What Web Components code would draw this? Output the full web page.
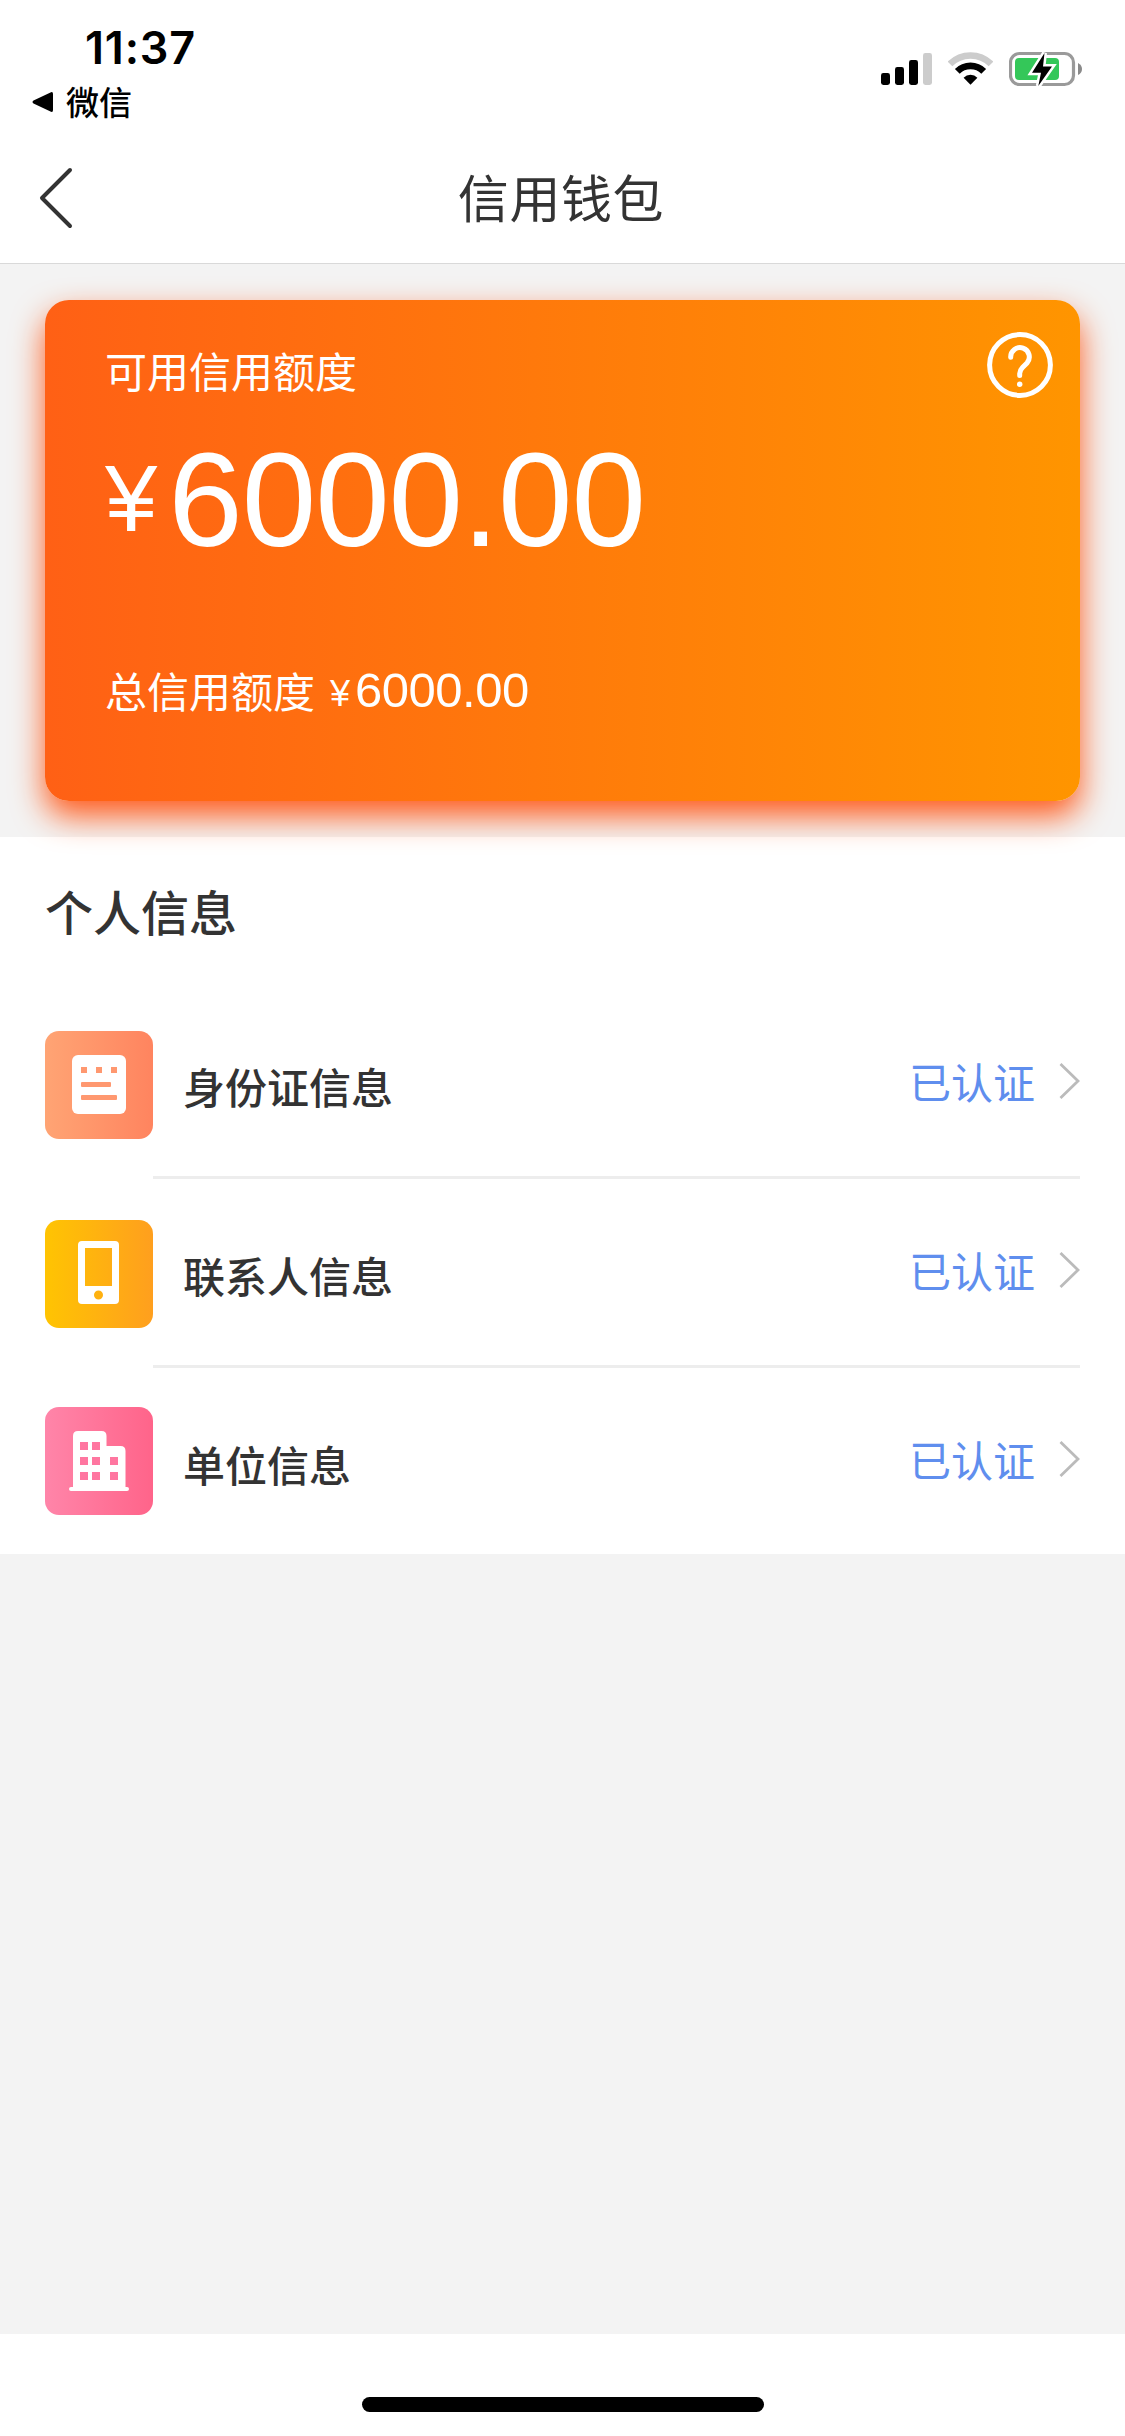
<!DOCTYPE html>
<html lang="zh-CN">
<head>
<meta charset="utf-8">
<title>信用钱包</title>
<style>
  body { margin: 0; background: #f3f3f3; }
</style>
</head>
<body>
<wallet-app></wallet-app>
<script>
const define = (name, html) => {
  const template = document.createElement('template');
  template.innerHTML = html;
  customElements.define(name, class extends HTMLElement {
    constructor() {
      super();
      this.attachShadow({ mode: 'open' }).append(template.content.cloneNode(true));
    }
  });
};

define('status-bar', `
<style>
  :host { display: flex; justify-content: space-between; height: 132px; box-sizing: border-box; color: #000; }
  .left { padding: 21px 0 0 32px; }
  .time { font: 600 45px/54px Inter, sans-serif; padding-left: 53px; letter-spacing: .8px; }
  .back { display: flex; align-items: center; gap: 12px; height: 54px; font-size: 33px; font-weight: 500; }
  .icons { display: flex; gap: 16px; padding: 50px 42px 0 0; height: 38px; }
  svg { display: block; }
</style>
<div class="left">
  <div class="time">11:37</div>
  <div class="back">
    <svg width="22" height="22" viewBox="0 0 22 22"><path d="M1.5 9.6 19 1.2Q21 .5 21 3V19Q21 21.5 19 20.8L1.5 12.4Q-.5 11 1.5 9.6Z"/></svg>
    <span>微信</span>
  </div>
</div>
<div class="icons">
  <svg width="51" height="38" viewBox="0 0 51 38">
    <rect y="23" width="9" height="12" rx="2.4"/><rect x="14" y="17" width="9" height="18" rx="2.4"/>
    <rect x="28" y="10" width="9" height="25" rx="2.4"/><rect x="42" y="3" width="9" height="32" rx="2.4" fill="#ccc"/>
  </svg>
  <svg width="45" height="38" viewBox="0 0 45 38" fill="none">
    <path d="M2 14A29 29 0 0 1 43 14" stroke="#ccc" stroke-width="6.600"/>
    <path d="M9.300 21.300A18.600 18.600 0 0 1 35.700 21.300" stroke="#000" stroke-width="6.800"/>
    <path d="M15.600 27.700A9.800 9.800 0 0 1 29.400 27.700L22.500 34.800Z" fill="#000"/>
  </svg>
  <svg width="74" height="38" viewBox="0 0 74 38">
    <rect x="1.500" y="3.500" width="63" height="31" rx="9" fill="none" stroke="#9a9a9a" stroke-width="3.200"/>
    <rect x="6" y="8" width="44" height="22" rx="4" fill="#34c759"/>
    <path d="M69 13Q73 15 73 19T69 25Z" fill="#8a8a8a"/>
    <path d="M35.500 3 23 22.700H32L29.300 36 43 16.400H34Z" fill="#000" stroke="#fff" stroke-width="5" paint-order="stroke"/>
  </svg>
</div>`);

define('nav-bar', `
<style>
  :host { display: grid; grid-template-columns: 120px 1fr 120px; align-items: center; height: 132px; box-sizing: border-box;
    border-bottom: 1px solid #d9d9d9; font-size: 51px; color: #333; text-align: center; }
  svg { display: block; margin-left: 38px; }
  ::slotted(*) { line-height: 129px; letter-spacing: .6px; margin: -2px 0 0 -3px; }
</style>
<svg width="36" height="64" viewBox="0 0 36 64" fill="none" stroke="#333" stroke-width="4" stroke-linecap="round" stroke-linejoin="round"><path d="M32 4 4 32 32 60"/></svg>
<slot></slot><i></i>`);

define('credit-card', `
<style>
  :host { display: flex; flex-direction: column; position: relative; height: 501px; box-sizing: border-box; margin: 36px 45px;
    padding: 43px 27px 0 60px; border-radius: 24px; color: #fff; font-size: 42px;
    background: linear-gradient(90deg, #ff6015, #ff9500); box-shadow: 0 15px 32px #ff5a1b; }
  .head { display: flex; justify-content: space-between; height: 82px; line-height: 54px; }
  .head svg { margin-top: -11px; }
  .amount { display: flex; align-items: flex-end; gap: 11px; height: 150px; font-family: "Liberation Sans", sans-serif; }
  .yen { font-size: 94px; line-height: 96px; padding-bottom: 28px; }
  .num { font-size: 134px; line-height: 150px; letter-spacing: -1.1px; }
  .total { display: flex; align-items: baseline; margin-top: 85px; line-height: 60px; }
  .total .num, .total .yen { font-family: "Liberation Sans", sans-serif; }
  .total .yen { font-size: 36px; line-height: 40px; margin: 0 0 0 15px; padding: 0; transform: translateY(-2px); }
  .total .num { font-size: 49px; line-height: 60px; margin-left: 5px; letter-spacing: -.5px; transform: translateY(-1px); }
</style>
<div class="head">
  <span>可用信用额度</span>
  <svg width="66" height="66" viewBox="0 0 66 66" fill="none" stroke="#fff" stroke-width="5" stroke-linecap="round">
    <circle cx="33" cy="33" r="30.400"/>
    <path d="M23.700 25.300A9.300 9.300 0 1 1 40 31L35.500 35.600Q32.700 38.500 32.700 41.500V43.500"/>
    <circle cx="32.700" cy="52.300" r="2.700" fill="#fff" stroke="none"/>
  </svg>
</div>
<div class="amount"><span class="yen">¥</span><span class="num"><slot name="available"></slot></span></div>
<div class="total"><span>总信用额度</span><span class="yen">¥</span><span class="num"><slot name="total"></slot></span></div>`);

define('info-row', `
<style>
  :host { display: flex; height: 189px; padding: 0 45px; }
  .icon { width: 108px; padding-top: var(--icon-top, 41px); }
  ::slotted(svg) { display: block; }
  .body { flex: 1; display: flex; align-items: center; justify-content: space-between; height: 186px; padding-left: 30px;
    border-bottom: 3px solid var(--line, #ededed); font-size: 42px; }
  .label { font-weight: 500; color: #333; padding-top: 7px; }
  .state { display: flex; align-items: center; gap: 23px; color: #5f8eee; padding-bottom: 4px; }
  .state svg { display: block; }
</style>
<div class="icon"><slot name="icon"></slot></div>
<div class="body">
  <span class="label"><slot></slot></span>
  <span class="state"><span>已认证</span>
    <svg width="22" height="38" viewBox="0 0 22 38" fill="none" stroke="#bbb" stroke-width="2.800"><path d="M2.500 2 20 19 2.500 36"/></svg>
  </span>
</div>`);

define('info-section', `
<style>
  :host { display: block; height: 717px; background: #fff; }
  h2 { margin: 0; padding: 38px 45px 0; height: 115px; font-size: 48px; line-height: 70px; font-weight: 500; color: #333; }
</style>
<h2><slot name="heading"></slot></h2>
<slot></slot>`);

define('home-indicator', `
<style>
  :host { display: flex; justify-content: center; height: 102px; background: #fff; }
  i { width: 402px; height: 15px; margin-top: 63px; border-radius: 8px; background: #000; }
</style><i></i>`);

define('wallet-app', `
<style>
  :host { display: flex; flex-direction: column; width: 1125px; height: 2436px; background: #f3f3f3;
    font-family: "Noto Sans CJK SC", sans-serif; line-height: 1.2; }
  header { background: #fff; height: 264px; }
  main { flex: 1; display: flow-root; }
  .last { --icon-top: 39px; --line: transparent; }
</style>
<header>
  <status-bar></status-bar>
  <nav-bar><span>信用钱包</span></nav-bar>
</header>
<main>
  <credit-card><span slot="available">6000.00</span><span slot="total">6000.00</span></credit-card>
  <info-section>
    <span slot="heading">个人信息</span>
    <info-row>
      <svg slot="icon" width="108" height="108" viewBox="0 0 108 108">
        <defs><linearGradient id="a"><stop stop-color="#ffa474"/><stop offset="1" stop-color="#ff845f"/></linearGradient></defs>
        <rect width="108" height="108" rx="14" fill="url(#a)"/>
        <rect x="27" y="24" width="54" height="59" rx="6" fill="#fff"/>
        <g fill="#ff9870"><rect x="36" y="36" width="6" height="6"/><rect x="51" y="36" width="6" height="6"/><rect x="66" y="36" width="6" height="6"/>
        <rect x="36" y="51" width="30" height="5" rx="1"/><rect x="36" y="64" width="36" height="5" rx="1"/></g>
      </svg>身份证信息</info-row>
    <info-row>
      <svg slot="icon" width="108" height="108" viewBox="0 0 108 108">
        <defs><linearGradient id="b"><stop stop-color="#ffc402"/><stop offset="1" stop-color="#ff9f1e"/></linearGradient></defs>
        <rect width="108" height="108" rx="14" fill="url(#b)"/>
        <path fill="#fff" fill-rule="evenodd" d="M37 21H70Q74 21 74 25V80Q74 84 70 84H37Q33 84 33 80V25Q33 21 37 21ZM40 28V66H67V28ZM53.500 70.500A4.500 4.500 0 1 0 53.500 79.500A4.500 4.500 0 1 0 53.500 70.500Z"/>
      </svg>联系人信息</info-row>
    <info-row class="last">
      <svg slot="icon" width="108" height="108" viewBox="0 0 108 108">
        <defs><linearGradient id="c"><stop stop-color="#ff85a9"/><stop offset="1" stop-color="#ff648a"/></linearGradient></defs>
        <rect width="108" height="108" rx="14" fill="url(#c)"/>
        <path fill="#fff" d="M33 24H56.500Q61.500 24 61.500 29V39H75.500Q80.500 39 80.500 44V80H82Q84 80 84 82T82 84H26Q24 84 24 82T26 80H28V29Q28 24 33 24Z"/>
        <g fill="#ff76a0"><rect x="35" y="35" width="8" height="8"/><rect x="47" y="35" width="8" height="8"/>
        <rect x="35" y="50" width="8" height="8"/><rect x="47" y="50" width="8" height="8"/><rect x="65" y="50" width="8" height="8"/>
        <rect x="35" y="65" width="8" height="8"/><rect x="47" y="65" width="8" height="8"/><rect x="65" y="65" width="8" height="8"/></g>
      </svg>单位信息</info-row>
  </info-section>
</main>
<home-indicator></home-indicator>`);
</script>
</body>
</html>
